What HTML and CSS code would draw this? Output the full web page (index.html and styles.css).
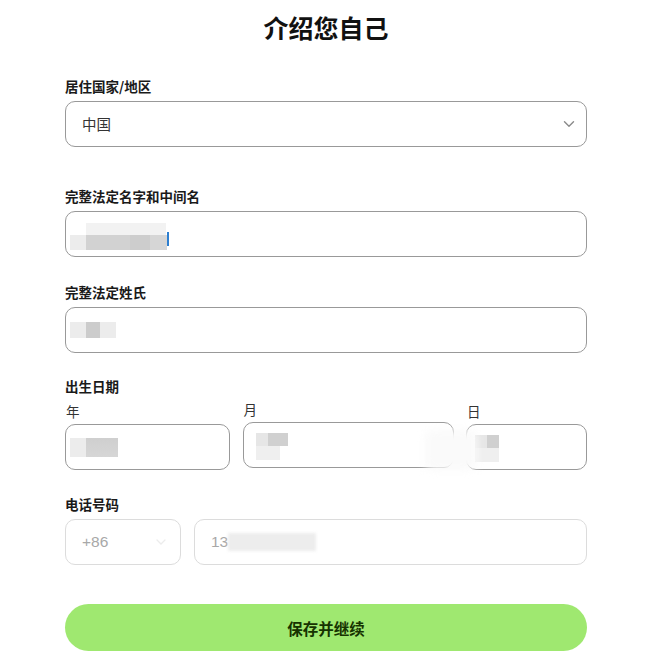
FILE: index.html
```html
<!DOCTYPE html>
<html lang="zh-CN">
<head>
<meta charset="utf-8">
<title>介绍您自己</title>
<link rel="stylesheet" href="styles.css">
</head>
<body>
<main class="page">
  <h1 class="title">介绍您自己</h1>

  <section class="field field-country">
    <div class="label">居住国家/地区</div>
    <div class="box select">
      <span class="value">中国</span>
      <svg class="chev" width="12" height="8" viewBox="0 0 12 8"><path d="M1.5 1.8 L6 6.2 L10.5 1.8" fill="none" stroke="#8a8a8a" stroke-width="1.4" stroke-linecap="round" stroke-linejoin="round"/></svg>
    </div>
  </section>

  <section class="field field-first-name">
    <div class="label">完整法定名字和中间名</div>
    <div class="box input">
      <span class="blur blur-name"><span class="blur-top"></span><span class="blur-bottom"></span></span>
      <span class="caret"></span>
    </div>
  </section>

  <section class="field">
    <div class="label">完整法定姓氏</div>
    <div class="box input">
      <span class="blur blur-last"><span class="blur-light"></span><span class="blur-dark"></span><span class="blur-light"></span></span>
    </div>
  </section>

  <section class="field field-date">
    <div class="label">出生日期</div>
    <div class="date-row">
      <div class="date-col date-year">
        <div class="sublabel">年</div>
        <div class="box input">
          <span class="blur blur-year"><span class="blur-light"></span><span class="blur-dark wide"></span></span>
        </div>
      </div>
      <div class="date-col date-month">
        <div class="sublabel">月</div>
        <div class="box input">
          <span class="blur blur-month"><span class="bm-top"></span><span class="bm-bottom"></span></span>
        </div>
      </div>
      <div class="date-col date-day">
        <div class="sublabel">日</div>
        <div class="box input">
          <span class="blur blur-month"><span class="bm-top"></span><span class="bm-bottom"></span></span>
        </div>
      </div>
      <span class="smudge"></span>
    </div>
  </section>

  <section class="field field-phone">
    <div class="label">电话号码</div>
    <div class="phone-row">
      <div class="box light code">
        <span class="code-value">+86</span>
        <svg class="chev-faint" width="10" height="6" viewBox="0 0 10 6"><path d="M1 1 L5 5 L9 1" fill="none" stroke="#ececec" stroke-width="1.3" stroke-linecap="round"/></svg>
      </div>
      <div class="box light phone">
        <span class="phone-value">13</span><span class="blur-phone"></span>
      </div>
    </div>
  </section>

  <button class="submit" type="button">保存并继续</button>
</main>
</body>
</html>
```

FILE: styles.css
```css
html, body {
  margin: 0;
  padding: 0;
  background: #ffffff;
}

body {
  font-family: "Noto Sans CJK SC", "Liberation Sans", sans-serif;
  color: #1a1a1a;
}

.page {
  width: 522px;
  margin: 0 0 0 65px;
  display: flex;
  flex-direction: column;
}

.title {
  margin: 0;
  padding-top: 11px;
  font-size: 25px;
  line-height: 32px;
  font-weight: 700;
  text-align: center;
  color: #111;
}

.field {
  display: flex;
  flex-direction: column;
  margin-top: 25px;
}

.field-country {
  margin-top: 33px;
}

.field-first-name {
  margin-top: 39px;
}

.field-date {
  margin-top: 23px;
}

.field-phone {
  margin-top: 24px;
}

.label {
  font-size: 13.5px;
  line-height: 20px;
  font-weight: 700;
  color: #1a1a1a;
  margin-bottom: 5px;
}

.box {
  box-sizing: border-box;
  height: 46px;
  border: 1px solid #999999;
  border-radius: 10px;
  display: flex;
  align-items: center;
  padding: 0 16px;
  background: #fff;
}

.select {
  justify-content: space-between;
  padding-right: 11px;
}

.value {
  font-size: 14.5px;
  line-height: 20px;
  color: #333;
}

.chev {
  display: block;
}

.input {
  padding-left: 4px;
}

.blur {
  display: flex;
  filter: blur(0.6px);
}

.blur-name {
  flex-direction: column;
  width: 97px;
  margin-top: 4px;
}

.blur-top {
  display: block;
  height: 12px;
  width: 80px;
  margin-left: 16px;
  background: #f2f2f2;
}

.blur-bottom {
  display: block;
  height: 15px;
  background: linear-gradient(to right, #ececec 0 16px, #d2d2d2 16px 60px, #cdcdcd 60px 80px, #d6d6d6 80px);
}

.caret {
  display: block;
  width: 2px;
  height: 14px;
  margin-top: 10px;
  background: #2d7fd0;
}

.blur-last {
  height: 16px;
}

.blur-light {
  display: block;
  width: 16px;
  background: #ececec;
}

.blur-dark {
  display: block;
  width: 14px;
  background: #cccccc;
}

.blur-dark.wide {
  width: 32px;
  background: linear-gradient(to bottom, #cfcfcf, #d6d6d6);
}

.blur-year {
  height: 19px;
}

.date-row {
  position: relative;
  display: flex;
  justify-content: space-between;
  margin-top: 1px;
}

.date-col {
  display: flex;
  flex-direction: column;
}

.date-year { width: 165px; }
.date-month { width: 211px; margin-top: -2px; }
.date-day { width: 121px; }

.sublabel {
  font-size: 13.5px;
  line-height: 18px;
  color: #333;
  margin-bottom: 4px;
  margin-left: 1px;
}

.date-month .box,
.date-day .box {
  padding-left: 12px;
}

.blur-month {
  flex-direction: column;
  width: 32px;
  margin-top: 2px;
}

.bm-top {
  display: block;
  height: 13px;
  background: linear-gradient(to right, #e6e6e6 0 12px, #d0d0d0 12px);
}

.bm-bottom {
  display: block;
  height: 14px;
  width: 24px;
  background: #efefef;
}

.date-day .blur-month {
  width: 24px;
  margin-left: -4px;
}

.smudge {
  position: absolute;
  left: 360px;
  top: 28px;
  width: 52px;
  height: 40px;
  background: #fafafa;
  filter: blur(4px);
  border-radius: 8px;
}

.phone-row {
  display: flex;
  gap: 13px;
}

.light {
  border-color: #dcdcdc;
}

.code {
  width: 116px;
  justify-content: space-between;
  padding-right: 14px;
}

.code-value,
.phone-value {
  font-family: "Liberation Sans", "Noto Sans CJK SC", sans-serif;
  font-size: 15.5px;
  color: #a8a8a8;
}

.phone {
  flex: 1;
}

.blur-phone {
  display: block;
  width: 88px;
  height: 18px;
  background: #ededed;
  filter: blur(1.5px);
}

.submit {
  margin-top: 39px;
  height: 47px;
  border: 0;
  border-radius: 24px;
  background: #9fe870;
  color: #163300;
  font-family: "Noto Sans CJK SC", "Liberation Sans", sans-serif;
  font-size: 15.5px;
  font-weight: 700;
  padding: 0;
  cursor: pointer;
}
```
